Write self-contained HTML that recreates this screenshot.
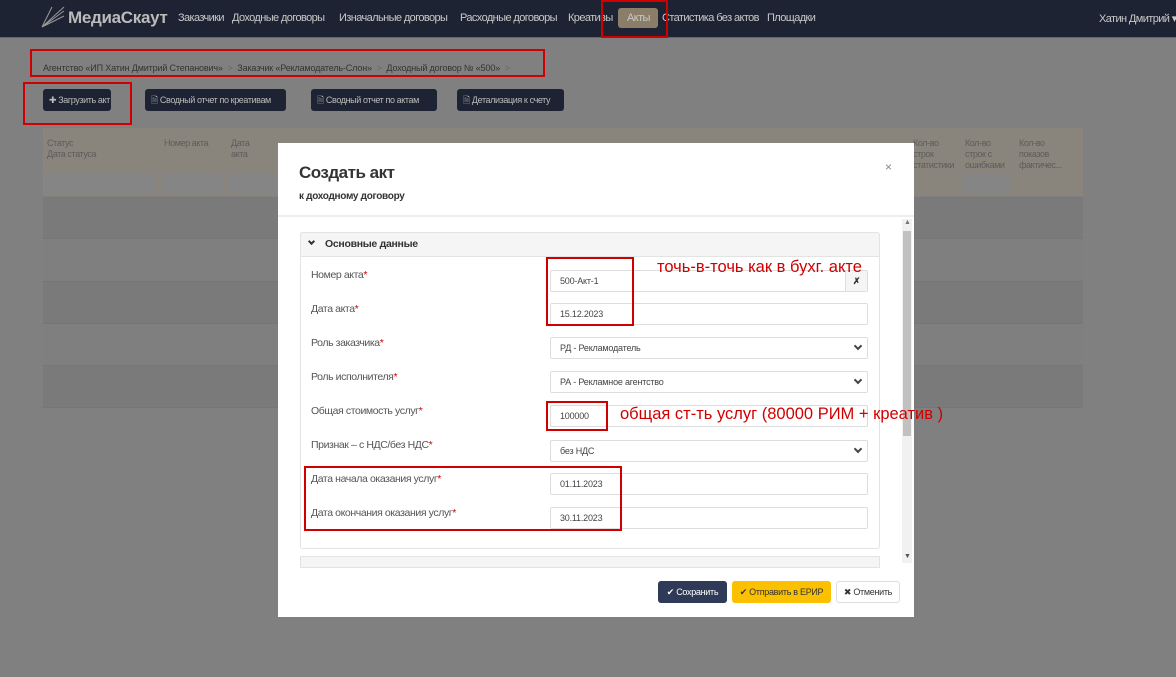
<!DOCTYPE html>
<html><head><meta charset="utf-8"><style>
*{box-sizing:border-box;margin:0;padding:0}
body{width:1176px;height:677px;overflow:hidden;background:#808080;font-family:"Liberation Sans",sans-serif;position:relative;font-size:11px}
.abs{position:absolute}
.nav{left:0;top:0;width:1176px;height:38px;background:#1d2332;border-bottom:1px solid #666}
.nav span{position:absolute;top:12px;color:#c9c9c9;font-size:11px;white-space:nowrap;letter-spacing:-.6px}
.red{position:absolute;border:2px solid #d00000}
.btn{position:absolute;top:89px;height:22px;background:#1d2332;color:#bbb;border-radius:3px;font-size:9px;line-height:22px;padding:0 6px;white-space:nowrap;letter-spacing:-.4px;overflow:hidden}
.th{position:absolute;color:#5c5c5c;font-size:9px;line-height:11px;letter-spacing:-.4px}
.row{position:absolute;left:43px;width:1040px;height:42px;border-bottom:1px solid #767676;background:#7f7f7f}
.modal{left:278px;top:143px;width:636px;height:474px;background:#fff}
.lbl{position:absolute;left:33px;font-size:10.5px;color:#555;letter-spacing:-.4px}
.lbl b{color:#c00;font-weight:normal}
.inp{position:absolute;left:272px;width:318px;height:22px;border:1px solid #ddd;border-radius:2px;font-size:9px;color:#444;padding-left:9px;line-height:21px;letter-spacing:-.2px}
.chev{position:absolute;right:6px;top:5px;width:6px;height:6px;border-right:2px solid #444;border-bottom:2px solid #444;transform:rotate(45deg)}
.note{position:absolute;color:#d00000;font-family:"Liberation Sans",sans-serif;font-size:16.5px;white-space:nowrap}
</style></head><body>
<div class="abs nav">
<svg class="abs" style="left:40px;top:5px" width="26" height="24"><g stroke="#999" stroke-width="1" fill="none"><path d="M2 22 L24 2 M2 22 L24 6 M2 22 L24 11 M2 22 L12 2"/></g></svg>
<span style="left:68px;top:8px;font-size:17px;font-weight:bold;color:#bbb;letter-spacing:-.3px">МедиаСкаут</span>
<span style="left:178px">Заказчики</span>
<span style="left:232px">Доходные договоры</span>
<span style="left:339px">Изначальные договоры</span>
<span style="left:460px">Расходные договоры</span>
<span style="left:568px">Креативы</span>
<div class="abs" style="left:618px;top:8px;width:40px;height:20px;background:#8b7e68;border-radius:3px"></div>
<span style="left:627px">Акты</span>
<span style="left:662px">Статистика без актов</span>
<span style="left:767px">Площадки</span>
<span style="left:1099px">Хатин Дмитрий ▾</span>
</div>
<div class="red" style="left:601px;top:0;width:67px;height:38px"></div>
<div class="abs" style="left:43px;top:63px;font-size:9px;color:#333;white-space:nowrap;letter-spacing:-.15px">Агентство «ИП Хатин Дмитрий Степанович» &nbsp;<span style="color:#666">&gt;</span>&nbsp; Заказчик «Рекламодатель-Слон» &nbsp;<span style="color:#666">&gt;</span>&nbsp; Доходный договор № «500» &nbsp;<span style="color:#666">&gt;</span></div>
<div class="red" style="left:30px;top:49px;width:515px;height:28px"></div>
<div class="btn" style="left:43px;width:68px">✚ Загрузить акт</div>
<div class="btn" style="left:145px;width:141px">🗎 Сводный отчет по креативам</div>
<div class="btn" style="left:311px;width:126px">🗎 Сводный отчет по актам</div>
<div class="btn" style="left:457px;width:107px">🗎 Детализация к счету</div>
<div class="red" style="left:23px;top:82px;width:109px;height:43px"></div>
<div class="abs" style="left:43px;top:128px;width:1040px;height:68px;background:#8a857c"></div>
<div class="th" style="left:47px;top:138px">Статус<br>Дата статуса</div>
<div class="th" style="left:164px;top:138px">Номер акта</div>
<div class="th" style="left:231px;top:138px">Дата<br>акта</div>
<div class="th" style="left:913px;top:138px">Кол-во<br>строк<br>статистики</div>
<div class="th" style="left:965px;top:138px">Кол-во<br>строк с<br>ошибками</div>
<div class="th" style="left:1019px;top:138px">Кол-во<br>показов<br>фактичес...</div>
<div class="abs" style="left:43px;top:174px;width:113px;height:19px;background:#858585;border-radius:3px"></div>
<div class="abs" style="left:161px;top:174px;width:62px;height:19px;background:#858585;border-radius:3px"></div>
<div class="abs" style="left:228px;top:174px;width:50px;height:19px;background:#858585;border-radius:3px"></div>
<div class="abs" style="left:962px;top:174px;width:47px;height:19px;background:#858585;border-radius:3px"></div>
<div class="row" style="top:197px;background:#7a7a7a"></div>
<div class="row" style="top:240px"></div>
<div class="row" style="top:282px;background:#7a7a7a"></div>
<div class="row" style="top:324px"></div>
<div class="row" style="top:366px;background:#7a7a7a"></div>

<div class="abs modal">
<div class="abs" style="left:21px;top:20px;font-size:17px;color:#333;font-weight:bold;letter-spacing:-.5px">Создать акт</div>
<div class="abs" style="left:21px;top:48px;font-size:10px;color:#333;font-weight:bold;letter-spacing:-.3px">к доходному договору</div>
<div class="abs" style="left:607px;top:17px;font-size:12px;color:#888">×</div>
<div class="abs" style="left:0;top:72px;width:636px;height:2px;background:#eee"></div>
<div class="abs" style="left:624px;top:76px;width:10px;height:344px;background:#f1f1f1"></div>
<div class="abs" style="left:625px;top:88px;width:8px;height:205px;background:#c1c1c1"></div>
<div class="abs" style="left:626px;top:76px;font-size:7px;color:#777">▲</div>
<div class="abs" style="left:626px;top:410px;font-size:7px;color:#555">▼</div>
<div class="abs" style="left:22px;top:89px;width:580px;height:317px;border:1px solid #e3e3e3;border-radius:3px"></div>
<div class="abs" style="left:22px;top:89px;width:580px;height:25px;background:#f5f5f5;border:1px solid #e3e3e3;border-radius:3px 3px 0 0;font-size:10.5px;font-weight:bold;color:#333;padding:5px 0 0 24px;letter-spacing:-.3px">Основные данные</div>
<div class="abs" style="left:31px;top:96px;width:5px;height:5px;border-right:2px solid #333;border-bottom:2px solid #333;transform:rotate(45deg)"></div>
<div class="abs" style="left:22px;top:413px;width:580px;height:12px;background:#f5f5f5;border:1px solid #e3e3e3"></div>
<div class="lbl" style="top:126px">Номер акта<b>*</b></div>
<div class="inp" style="top:127px">500-Акт-1<span style="position:absolute;right:0;top:0;width:22px;height:20px;border-left:1px solid #ddd;background:#f5f5f5;text-align:center;font-weight:bold;color:#333">✗</span></div>
<div class="lbl" style="top:160px">Дата акта<b>*</b></div>
<div class="inp" style="top:160px">15.12.2023</div>
<div class="lbl" style="top:194px">Роль заказчика<b>*</b></div>
<div class="inp" style="top:194px">РД - Рекламодатель<i class="chev"></i></div>
<div class="lbl" style="top:228px">Роль исполнителя<b>*</b></div>
<div class="inp" style="top:228px">РА - Рекламное агентство<i class="chev"></i></div>
<div class="lbl" style="top:262px">Общая стоимость услуг<b>*</b></div>
<div class="inp" style="top:262px">100000</div>
<div class="lbl" style="top:296px">Признак – с НДС/без НДС<b>*</b></div>
<div class="inp" style="top:297px">без НДС<i class="chev"></i></div>
<div class="lbl" style="top:330px">Дата начала оказания услуг<b>*</b></div>
<div class="inp" style="top:330px">01.11.2023</div>
<div class="lbl" style="top:364px">Дата окончания оказания услуг<b>*</b></div>
<div class="inp" style="top:364px">30.11.2023</div>
<div class="abs" style="left:380px;top:438px;width:69px;height:22px;background:#2e3a57;color:#fff;border-radius:3px;font-size:9px;line-height:22px;text-align:center;letter-spacing:-.3px">✔ Сохранить</div>
<div class="abs" style="left:454px;top:438px;width:99px;height:22px;background:#fbc000;color:#333;border-radius:3px;font-size:9px;line-height:22px;text-align:center;letter-spacing:-.3px">✔ Отправить в ЕРИР</div>
<div class="abs" style="left:558px;top:438px;width:64px;height:22px;background:#fff;border:1px solid #ddd;color:#333;border-radius:3px;font-size:9px;line-height:20px;text-align:center;letter-spacing:-.3px">✖ Отменить</div>
</div>
<div class="red" style="left:546px;top:257px;width:88px;height:69px"></div>
<div class="red" style="left:546px;top:401px;width:62px;height:30px"></div>
<div class="red" style="left:304px;top:466px;width:318px;height:65px"></div>
<div class="note" style="left:657px;top:258px">точь-в-точь как в бухг. акте</div>
<div class="note" style="left:620px;top:405px">общая ст-ть услуг (80000 РИМ + креатив )</div>
</body></html>
